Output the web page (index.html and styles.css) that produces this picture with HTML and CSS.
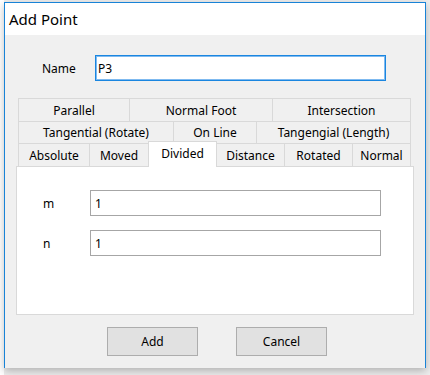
FILE: index.html
```html
<!DOCTYPE html>
<html>
<head>
<meta charset="utf-8">
<link rel="stylesheet" href="styles.css">
</head>
<body>
<div class="window">
  <div class="titlebar">Add Point</div>
  <div class="content">
    <div class="name-row">
      <span class="name-label">Name</span>
      <input class="field focused" type="text" value="P3">
    </div>
    <div class="tabwidget">
      <div class="tab-row row1">
        <div class="tab first t-parallel">Parallel</div>
        <div class="tab t-normalfoot">Normal Foot</div>
        <div class="tab t-intersection">Intersection</div>
      </div>
      <div class="tab-row row2">
        <div class="tab first t-tangrot">Tangential (Rotate)</div>
        <div class="tab t-online">On Line</div>
        <div class="tab t-tanglen">Tangengial (Length)</div>
      </div>
      <div class="tab-row row3">
        <div class="tab first t-absolute">Absolute</div>
        <div class="tab t-moved">Moved</div>
        <div class="tab selected t-divided">Divided</div>
        <div class="tab t-distance">Distance</div>
        <div class="tab t-rotated">Rotated</div>
        <div class="tab t-normal">Normal</div>
      </div>
      <div class="panel">
        <div class="param-row">
          <span class="param-label">m</span>
          <input class="field" type="text" value="1">
        </div>
        <div class="param-row">
          <span class="param-label">n</span>
          <input class="field" type="text" value="1">
        </div>
      </div>
    </div>
    <div class="buttons">
      <button class="btn">Add</button>
      <button class="btn">Cancel</button>
    </div>
  </div>
</div>
</body>
</html>
```

FILE: styles.css
```css
* { box-sizing: border-box; }
html, body { margin: 0; padding: 0; }
body {
  width: 430px;
  height: 375px;
  overflow: hidden;
  background: linear-gradient(to right, #ffffff 0, #ffffff 4px, #ededed 4px);
  font-family: "Noto Sans", "Open Sans", sans-serif;
  font-size: 12px;
  color: #000;
  padding: 2px 0 0 4px;
}
.window {
  width: 422px;
  height: 366px;
  border: 1px solid #1883d7;
  border-bottom: none;
  background: #f0f0f0;
  box-shadow: 0 3px 8px rgba(0,0,0,0.25);
  display: flex;
  flex-direction: column;
}
.titlebar {
  height: 32px;
  background: #ffffff;
  font-size: 15px;
  line-height: 32px;
  padding-left: 4px;
}
.content {
  flex: 1;
  display: flex;
  flex-direction: column;
}
.name-row {
  display: flex;
  align-items: center;
  margin-top: 20px;
  padding-left: 37px;
}
.name-label { width: 53px; }
.field {
  font-family: "Noto Sans", "Open Sans", sans-serif;
  font-size: 12px;
  color: #000;
  width: 291px;
  height: 26px;
  border: 1px solid #a6a6a6;
  background: #fff;
  padding: 0 4px;
  margin: 0;
  outline: none;
}
.field.focused {
  border: 1px solid #1a86e0;
  box-shadow: inset 0 0 0 1px #7fbaf0;
  padding: 0 2px;
}
.tabwidget {
  margin-top: 17px;
  margin-left: 11px;
  width: 398px;
  display: flex;
  flex-direction: column;
}
.tab-row {
  display: flex;
  padding-left: 2px;
  align-items: flex-start;
}
.row1, .row3 { height: 23px; }
.row2 { height: 22px; }
.tab {
  height: 100%;
  border-top: 1px solid #d9d9d9;
  border-right: 1px solid #d9d9d9;
  background: #f0f0f0;
  display: flex;
  align-items: center;
  justify-content: center;
  white-space: nowrap;
}
.tab.first { border-left: 1px solid #d9d9d9; }
.tab.selected {
  height: 26px;
  margin-top: -2px;
  background: #ffffff;
  border-left: 1px solid #d9d9d9;
  margin-left: -1px;
  padding-bottom: 3px;
  position: relative;
  z-index: 1;
}
.t-parallel { width: 112px; }
.t-normalfoot { width: 143px; }
.t-intersection { width: 138px; }
.t-tangrot { width: 156px; }
.t-online { width: 83px; }
.t-tanglen { width: 154px; }
.t-absolute { width: 72px; }
.t-moved { width: 59px; }
.t-divided { width: 69px; }
.t-distance { width: 68px; }
.t-rotated { width: 68px; }
.t-normal { width: 58px; }
.panel {
  height: 149px;
  border: 1px solid #d9d9d9;
  background: #ffffff;
  padding: 23px 0 0 26px;
  display: flex;
  flex-direction: column;
  gap: 14px;
}
.param-row {
  display: flex;
  align-items: center;
}
.param-label { width: 47px; }
.buttons {
  display: flex;
  gap: 38px;
  margin-top: 12px;
  padding-left: 102px;
}
.btn {
  font-family: "Noto Sans", "Open Sans", sans-serif;
  font-size: 12px;
  color: #000;
  width: 91px;
  height: 29px;
  background: #e1e1e1;
  border: 1px solid #adadad;
  margin: 0;
  padding: 0;
}
```
